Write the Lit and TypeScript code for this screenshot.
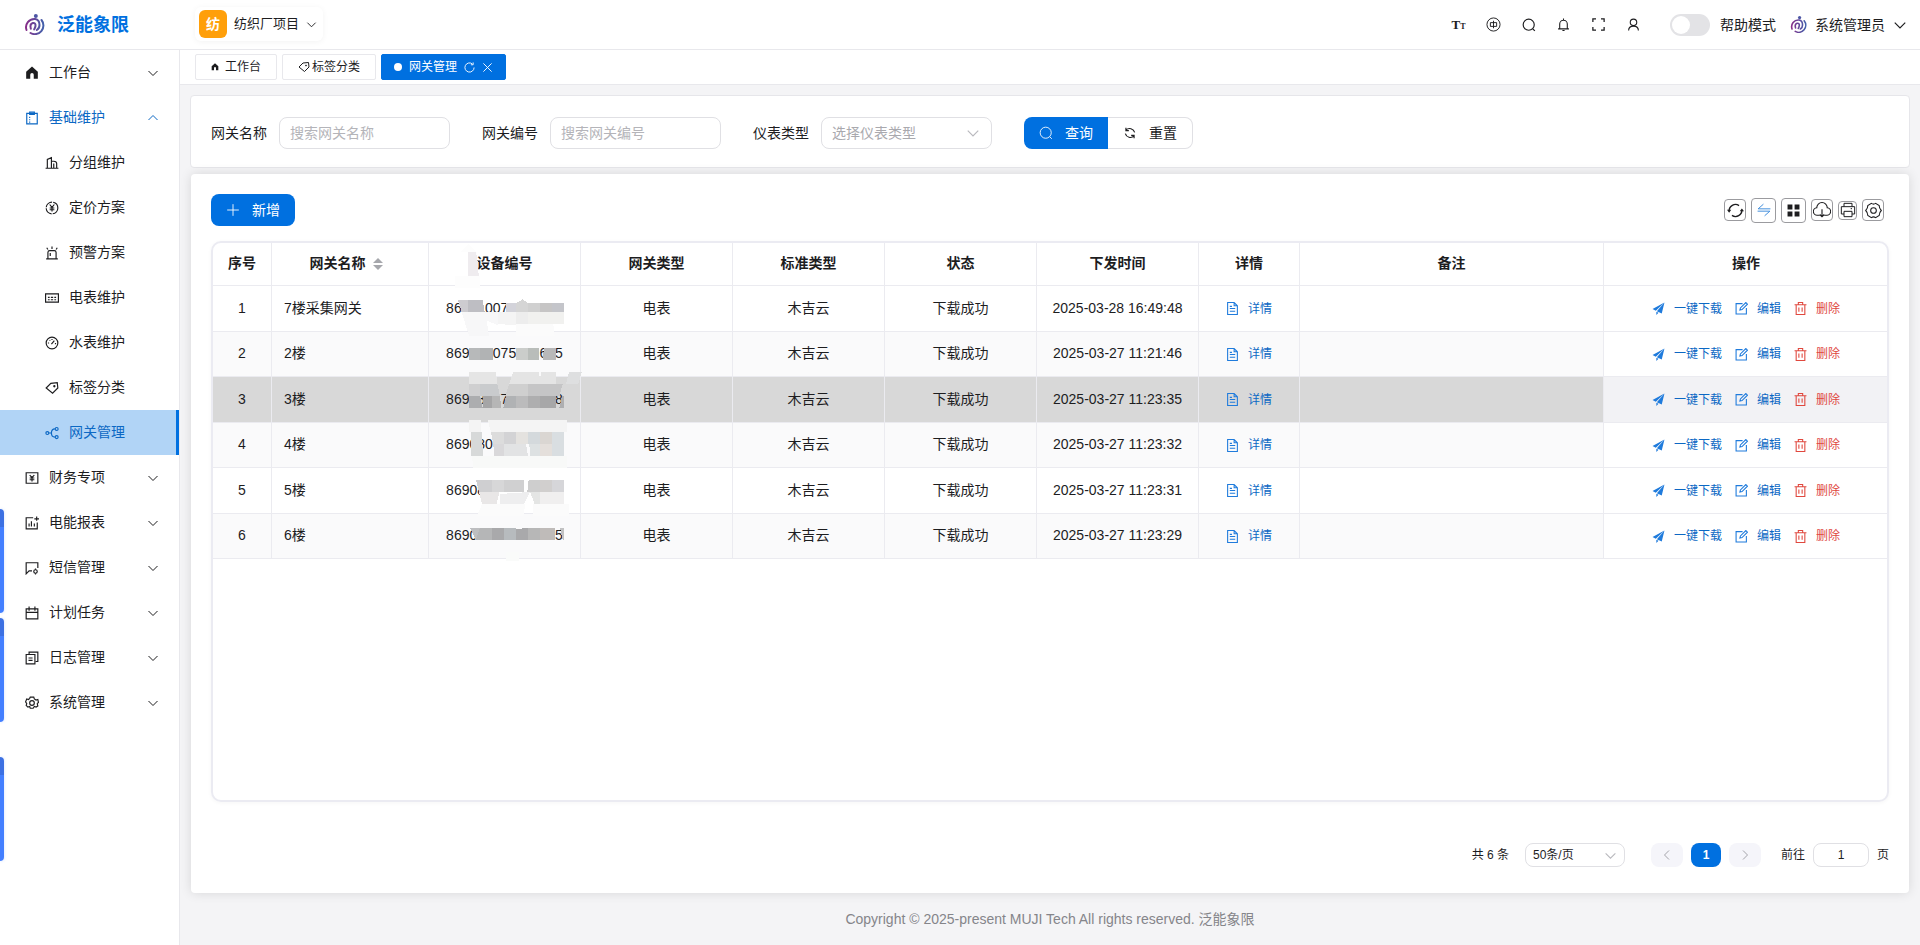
import { LitElement, html, svg, css, nothing } from "lit";
import { customElement } from "lit/decorators.js";
import { classMap } from "lit/directives/class-map.js";
import { styleMap } from "lit/directives/style-map.js";

/* Line icons share a 24-unit grid; "currentColor" carries the text colour. */
const glyphs: Record<string, unknown> = {
  down: svg`<path d="M3 8l9 9 9-9"/>`,
  up: svg`<path d="M3 16l9-9 9 9"/>`,
  left: svg`<path d="M16 3l-9 9 9 9"/>`,
  right: svg`<path d="M8 3l9 9-9 9"/>`,
  home: svg`<path class="f" d="M12 1L2 10v12h7v-7a3 3 0 0 1 6 0v7h7V10z"/>`,
  clipboard: svg`<path d="M3 4h18v18H3z"/><path d="M8 2h8v4H8zM7 11h2M7 15h2M7 19h2"/>`,
  building: svg`<path d="M1 21h22M4 21V6l7-3v18M11 9h4q5 0 5 4v8M15 13v8"/>`,
  coin: svg`<circle cx="12" cy="12" r="10" stroke-dasharray="14 2"/><path d="M8 6l4 5 4-5M8 12h8M8 15h8M12 11v7"/>`,
  alarm: svg`<path d="M5 22V11q0-3 3-3h8q3 0 3 3v11M2 22h20M12 5V1M5 6L3 3M19 6l2-3M9 12v5"/>`,
  meter: svg`<path d="M1 5h22v14H1z"/><path d="M5 11h3M10 11h4M16 11h3M5 15h3M10 15h4M16 15h3"/>`,
  gauge: svg`<circle cx="12" cy="12" r="10"/><path d="M11 14l5-6M5 12h2M17 13h2M8 7l1 1M12 5v2"/>`,
  tag: svg`<path d="M2 12l8-8 11-1 1 9-9 9z"/><circle cx="16" cy="9" r="1"/>`,
  nodes: svg`<circle cx="4" cy="12" r="2.500"/><circle cx="20" cy="5" r="2.500"/><circle cx="20" cy="19" r="2.500"/><path d="M7 12h4M17 5q-6 0-6 7t6 7"/>`,
  money: svg`<path d="M2 3h20v18H2z"/><path d="M8 7l4 4 4-4M8 12h8M8 15h8M12 11v7"/>`,
  chart: svg`<path d="M14 3H2v19h19V11M7 18v-5M11 18V9M16 18v-5M20 1v7M16 5h8"/>`,
  sms: svg`<path d="M12 17H7l-5 5V3h20v9"/><circle cx="18" cy="18" r="3"/><path d="M18 13v2M18 21v2"/>`,
  calendar: svg`<path d="M2 5h20v17H2zM2 11h20M7 1v7M17 1v7"/>`,
  copy: svg`<path d="M7 6V2h15v16h-4"/><path d="M2 6h15v16H2zM6 12h7M6 16h7"/>`,
  gear: svg`<path d="M9 2h6l1 3 3 2 3-1 1 5-2 2 1 4-3 2-3-1-2 3H9l-1-3-3 1-3-3 1-3-2-3 2-5 3 1 2-2z"/><circle cx="12" cy="12" r="4"/>`,
  search: svg`<circle cx="11.500" cy="11.500" r="9.500"/><path d="M18.500 18.500L22 22"/>`,
  bell: svg`<path d="M2 20h20M5 20v-9a7 7 0 0 1 14 0v9M12 4V1M10 23h4"/>`,
  full: svg`<path d="M3 8V3h5M16 3h5v5M21 16v5h-5M8 21H3v-5"/>`,
  user: svg`<circle cx="12" cy="8" r="6"/><path d="M3 23c0-6 4-8 9-8s9 2 9 8"/>`,
  lang: svg`<circle cx="12" cy="12" r="10.500"/><path d="M7 9h10v6H7zM12 6v12"/>`,
  reload: svg`<path d="M22 12a10 10 0 1 1-4-8M20 1v5h-5"/>`,
  close: svg`<path d="M3 3l18 18M21 3L3 21"/>`,
  refresh: svg`<path d="M5 7a9 9 0 0 1 15 4M19 17a9 9 0 0 1-15-4M5 3v5h5M19 21v-5h-5"/>`,
  sync: svg`<path d="M3 13A9 9 0 0 1 17 5M21 11A9 9 0 0 1 7 19"/><path class="f" d="M0 11l6 0-3 4zM24 13l-6 0 3-4z"/>`,
  plus: svg`<path d="M12 2v20M2 12h20"/>`,
  swap: svg`<path d="M23 10H2l9-8M1 14h21l-9 8"/>`,
  grid: svg`<path class="f" d="M1 1h9v9H1zM14 1h9v9h-9zM1 14h9v9H1zM14 14h9v9h-9z"/>`,
  cloud: svg`<path d="M9 19H6A5 5 0 0 1 5 9a7 7 0 0 1 14 0 5 5 0 0 1-1 10h-3M12 11v10M9 18l3 3 3-3"/>`,
  print: svg`<path d="M6 7V2h12v5M6 18H2V7h20v11h-4M6 14h12v8H6zM16 10h2"/>`,
  cog: svg`<path d="M9 2q3 2 6 0l5 3q0 4 3 7-3 3-3 7l-5 3q-3-2-6 0l-5-3q0-4-3-7 3-3 3-7z"/><circle cx="12" cy="12" r="4"/>`,
  doc: svg`<path d="M3 1h12l6 6v16H3zM15 1v6h6M7 12h10M7 17h10M7 8h4"/>`,
  send: svg`<path class="f" d="M23 1L1 13l6 3zM23 1L9 17l9 4zM8 18v6l4-4z"/>`,
  edit: svg`<path d="M14 3H2v19h19V11"/><path d="M9 15l1-4L20 1l3 3-10 10z"/>`,
  trash: svg`<path d="M1 5h22M4 5v18h16V5M8 5V1h8v4M9 10v8M15 10v8"/>`,
};

const icon = (name: string, size = 12, weight = 2) => html`<svg
  class="icon" width=${size} height=${size} viewBox="0 0 24 24"
  stroke-width=${weight} aria-hidden="true">${glyphs[name]}</svg>`;

const brandMark = (size: number) => html`<svg width=${size} height=${size} viewBox="0 0 60 63" fill="none" aria-hidden="true">
  <defs><linearGradient id="brand" gradientUnits="userSpaceOnUse" x1="0" y1="0" x2="60" y2="0"><stop offset="0" stop-color="#8c2a86"/><stop offset="1" stop-color="#3f63ad"/></linearGradient></defs>
  <circle cx="34" cy="6" r="6" fill="#4c56a4"/>
  <g stroke="url(#brand)" stroke-width="6" stroke-linecap="round">
    <path d="M6 48A25 25 0 0 1 32 15q13 2 13 18 0 10-8 15"/>
    <path d="M51 18a26 26 0 0 1-33 39"/>
    <path d="M19 44q-4-14 6-17 9-1 8 9-1 6-4 10"/>
  </g></svg>`;

const menu = [
  { icon: "home", label: "工作台" },
  {
    icon: "clipboard", label: "基础维护", open: true,
    children: [
      { icon: "building", label: "分组维护" },
      { icon: "coin", label: "定价方案" },
      { icon: "alarm", label: "预警方案" },
      { icon: "meter", label: "电表维护" },
      { icon: "gauge", label: "水表维护" },
      { icon: "tag", label: "标签分类" },
      { icon: "nodes", label: "网关管理", active: true },
    ],
  },
  { icon: "money", label: "财务专项" },
  { icon: "chart", label: "电能报表" },
  { icon: "sms", label: "短信管理" },
  { icon: "calendar", label: "计划任务" },
  { icon: "copy", label: "日志管理" },
  { icon: "gear", label: "系统管理" },
];

const columns = [
  { label: "序号", width: 59 },
  { label: "网关名称", width: 157 },
  { label: "设备编号", width: 152 },
  { label: "网关类型", width: 152 },
  { label: "标准类型", width: 152 },
  { label: "状态", width: 152 },
  { label: "下发时间", width: 162 },
  { label: "详情", width: 101 },
  { label: "备注", width: 304 },
  { label: "操作", width: 284 },
];

/* Device numbers are 15 digits; a number stands for that many masked digits. */
const rows: { name: string; device: (string | number)[]; time: string; current?: boolean }[] = [
  { name: "7楼采集网关", device: ["86", 3, "0075", 6], time: "2025-03-28 16:49:48" },
  { name: "2楼", device: ["869", 3, "075", 3, "6", 1, "5"], time: "2025-03-27 11:21:46" },
  { name: "3楼", device: ["869", 1, "8", 2, "7", 6, "8"], time: "2025-03-27 11:23:35", current: true },
  { name: "4楼", device: ["869080", 9], time: "2025-03-27 11:23:32" },
  { name: "5楼", device: ["86908", 10], time: "2025-03-27 11:23:31" },
  { name: "6楼", device: ["8690", 10, "5"], time: "2025-03-27 11:23:29" },
];

/* Mask tiles: [fill, polygon points], three units to a pixel. */
const tiles: [string, string][] = [
  ["#fdfdfd", "836,42 860,66 866,138 870,138 870,174 796,174 796,138 834,138 834,66 810,66"],
  ["#efecef", "834,66 858,66 864,100 866,138 834,138"],
  ["#cdccd0", "804,210 834,210 834,246 815,246"],
  ["#bebec3", "834,210 878,210 884,246 834,246"],
  ["#f7f7f8", "815,246 870,246 925,246 925,286 890,272 897,318 837,318"],
  ["#f4f4f4", "925,246 978,246 978,286 925,282"],
  ["#ededed", "978,246 1014,246 1014,282 978,282"],
  ["#f1f1ef", "1014,246 1122,246 1122,282 1014,282"],
  ["#d3d3da", "948,219 978,219 978,246 948,246"],
  ["#d5d5d5", "978,219 998,208 1014,219 1014,246 978,246"],
  ["#d0d0d0", "1014,219 1050,219 1050,246 1014,246"],
  ["#c6c5c5", "1050,219 1086,219 1086,246 1050,246"],
  ["#c4c5ca", "1086,219 1122,219 1122,246 1086,246"],
  ["#fbfbfb", "978,282 1090,282 1094,318 978,318"],
  ["#b7b9ba", "837,354 870,354 870,390 837,390"],
  ["#b1b3b4", "870,354 908,354 908,390 870,390"],
  ["#cbcdcb", "978,354 1014,354 1014,390 978,390"],
  ["#b9bdba", "1014,354 1047,354 1047,390 1014,390"],
  ["#b8b8b9", "1062,354 1098,354 1098,390 1058,390"],
  ["#e5e5e5", "837,426 918,426 922,462 837,462"],
  ["#e4e4e4", "970,426 1047,426 1047,438 1054,438 1054,426 1098,426 1098,462 958,462"],
  ["#dedfe0", "1137,426 1175,426 1165,462 1128,462"],
  ["#cfcfd0", "837,462 870,462 870,498 837,498"],
  ["#c9cbcd", "870,462 922,462 930,498 870,498"],
  ["#cfcfcf", "958,462 1014,462 1014,498 945,498"],
  ["#c5c5c6", "1014,462 1118,462 1108,498 1014,498"],
  ["#acadaf", "837,498 870,498 878,534 837,534"],
  ["#a5a5a6", "880,498 906,498 906,534 880,534"],
  ["#b6b6b6", "906,498 930,498 934,534 906,534"],
  ["#b0b2b4", "948,498 978,498 978,534 940,534"],
  ["#bbbbbc", "978,498 1014,498 1014,534 978,534"],
  ["#aeaeaf", "1014,498 1050,498 1050,534 1014,534"],
  ["#a7a7a8", "1050,498 1098,498 1098,534 1050,534"],
  ["#aeafb1", "1116,498 1122,498 1122,534 1108,534"],
  ["#f4f4f4", "837,570 873,570 873,606 837,606"],
  ["#f4f4f4", "893,570 1131,570 1131,606 903,606"],
  ["#d7d9d9", "843,606 875,606 879,678 843,678"],
  ["#dcdcdc", "903,606 942,606 942,642 910,642"],
  ["#d3d3d5", "942,606 978,606 978,642 942,642"],
  ["#e4e2df", "978,606 1014,606 1014,642 978,642"],
  ["#d4d9dc", "1014,606 1050,606 1050,642 1014,642"],
  ["#dad6d2", "1050,606 1086,606 1086,642 1050,642"],
  ["#d9dee1", "1086,606 1122,606 1122,678 1086,678"],
  ["#d9d8da", "910,642 942,642 942,678 912,678"],
  ["#e2e3e4", "942,642 1008,642 1014,678 942,678"],
  ["#dde1e2", "1018,642 1050,642 1050,678 1020,678"],
  ["#e4dfdb", "1050,642 1086,642 1086,678 1050,678"],
  ["#f8f9f8", "846,678 1131,678 1131,714 850,714"],
  ["#cfcfd1", "858,750 906,750 906,786 867,786"],
  ["#d7d7d8", "906,750 942,750 942,786 906,786"],
  ["#d0d0d1", "942,750 1002,750 1002,786 942,786"],
  ["#cecece", "1016,750 1050,750 1050,786 1012,786"],
  ["#d1cfce", "1050,750 1086,750 1086,786 1050,786"],
  ["#d6d6d9", "1086,750 1122,750 1122,786 1086,786"],
  ["#e9e7e7", "867,786 928,786 920,822 876,822"],
  ["#eeeeef", "930,792 1020,786 1002,822 930,822"],
  ["#e4e5e4", "1020,786 1050,786 1050,822 1034,822"],
  ["#f0efef", "1050,786 1122,786 1122,822 1050,822"],
  ["#fbfbfb", "876,822 1006,822 1000,858 861,858"],
  ["#fbfbfb", "1030,822 1137,822 1137,858 1030,858"],
  ["#bdbec0", "840,894 870,894 870,930 858,930"],
  ["#b5b6b7", "870,894 906,894 906,930 858,930"],
  ["#a9a9ab", "906,894 942,894 942,930 906,930"],
  ["#b7bbbe", "942,894 978,894 978,930 942,930"],
  ["#a9a9ab", "978,897 1014,894 1014,930 978,930"],
  ["#b7b7b7", "1014,894 1050,894 1050,930 1014,930"],
  ["#bfbbb9", "1050,894 1096,894 1096,930 1050,930"],
  ["#c2c2c3", "1110,894 1122,894 1122,930 1118,930"],
  ["#fafbfa", "948,966 986,966 986,992 948,992"],
];

const tools = [
  { icon: "sync", size: 22, art: 17, weight: 2, label: "刷新" },
  { icon: "swap", size: 25, art: 14, weight: 1.5, label: "切换", accent: true },
  { icon: "grid", size: 25, art: 13, weight: 1, label: "列设置" },
  { icon: "cloud", size: 22, art: 18, weight: 1.5, label: "导出" },
  { icon: "print", size: 19, art: 16, weight: 1.5, label: "打印" },
  { icon: "cog", size: 22, art: 17, weight: 1.5, label: "设置" },
];

@customElement("app-root")
export class AppRoot extends LitElement {
  static styles = css`
    :host {
      --blue: #0070e0;
      --line: #e8e8ec;
      display: flex;
      flex-direction: column;
      min-height: 100vh;
      position: relative;
      color: #1d1d1f;
      background: #f4f4f6;
      font: 14px/20px "Liberation Sans", "Noto Sans CJK SC", sans-serif;
    }
    * { box-sizing: border-box; }
    button, input, select { font: inherit; color: inherit; margin: 0; }
    button { cursor: pointer; }
    a { color: inherit; text-decoration: none; }
    .icon { flex: none; fill: none; stroke: currentColor; display: block; }
    .icon .f { fill: currentColor; stroke: none; }

    .top { display: flex; height: 50px; background: #fff; border-bottom: 1px solid var(--line); }
    .brand { width: 180px; flex: none; display: flex; align-items: center; gap: 12px; padding-left: 24px;
      color: var(--blue); font-size: 18px; font-weight: 700; }
    .project { display: flex; align-items: center; gap: 7px; height: 34px; margin: 7px 0 0 15px; padding: 0 6px 0 4px;
      border: 0; border-radius: 6px; background: #fff; box-shadow: 0 1px 6px rgba(0,0,0,.05); font-size: 13px; }
    .badge { width: 28px; height: 28px; border-radius: 6px; background: #ff9f0a; color: #fff; font-weight: 700; line-height: 28px; font-size: 14px; }
    .actions { margin-left: auto; display: flex; align-items: center; padding-right: 13px; }
    .ib { border: 0; background: none; padding: 0; width: 35px; height: 35px; display: grid; place-items: center; }
    .ib.tt { font: 700 13px "Liberation Serif", serif; display: flex; align-items: baseline; justify-content: center; line-height: 35px; }
    .tt small { font-size: 8px; }
    .help { display: flex; align-items: center; gap: 10px; margin-left: 19px; }
    .switch { appearance: none; width: 40px; height: 22px; margin: 0; border-radius: 11px; background: #e3e3e6; padding: 2px; }
    .switch::before { content: ""; display: block; width: 18px; height: 18px; border-radius: 50%; background: #fff; }
    .account { display: flex; align-items: center; gap: 8px; border: 0; background: none; padding: 0; margin-left: 14px; }

    .body { flex: 1; display: flex; }
    .side { width: 180px; flex: none; background: #fff; border-right: 1px solid var(--line); }
    .side ul { list-style: none; margin: 0; padding: 0; }
    .item { display: flex; align-items: center; gap: 10px; height: 45px; padding: 0 20px 0 25px; }
    .item .icon:last-child { margin-left: auto; }
    .item span { padding-bottom: 2px; }
    .item.sub { padding-left: 45px; }
    .item.open { color: #0c68c4; }
    .item.active { color: #0c68c4; background: #b1d4f6; border-right: 3px solid var(--blue); }

    .main { flex: 1; min-width: 0; display: flex; flex-direction: column; }
    .tabs { display: flex; gap: 5px; padding: 4px 15px; height: 35px; background: #fff; border-bottom: 1px solid var(--line); }
    .tab { display: flex; align-items: center; gap: 6px; height: 26px; padding: 0 15px; border: 1px solid var(--line); border-radius: 2px; font-size: 12px; }
    .tab.tight { gap: 2px; }
    .tab.on { background: var(--blue); border-color: var(--blue); color: #fff; padding: 0 12px; gap: 7px; }
    .dot { width: 8px; height: 8px; border-radius: 50%; background: #fff; }

    .panel { margin: 10px 10px 0; padding: 21px 20px 0; height: 73px; background: #fff; border: 1px solid #e6e6ea; border-radius: 4px; }
    .search { display: flex; align-items: center; gap: 32px; }
    .field { display: flex; align-items: center; gap: 12px; }
    .box { width: 171px; height: 32px; border: 1px solid #e0e0e4; border-radius: 8px; background: #fff; padding: 0 10px; outline: 0; }
    .box::placeholder { color: #b4b4b9; opacity: 1; }
    .pick { position: relative; display: flex; align-items: center; }
    .pick select { appearance: none; }
    .pick .box { color: #a9a9ae; }
    .pick .icon { position: absolute; right: 12px; color: #b9b9be; pointer-events: none; }
    .btn { display: flex; align-items: center; gap: 12px; height: 32px; padding: 0 15px; border: 0; border-radius: 8px; }
    .btn.primary { background: var(--blue); color: #fff; }
    .group { display: flex; }
    .group .btn:first-child { border-radius: 8px 0 0 8px; }
    .group .btn:last-child { border-radius: 0 8px 8px 0; background: #fff; border: 1px solid #e0e0e4; border-left: 0; }

    .card { flex: 1; display: flex; flex-direction: column; margin: 6px 11px 0; padding: 20px 20px 26px; background: #fff;
      border-radius: 4px; box-shadow: 0 0 12px rgba(0,0,0,.12); }
    .bar { display: flex; justify-content: space-between; align-items: center; }
    .tools { display: flex; align-items: center; gap: 5px; padding-right: 5px; }
    .tool { display: grid; place-items: center; padding: 0; border: 1px solid #9b9b9f; border-radius: 4px; background: #fff; }
    .tool.accent { color: #2a80d8; }

    .frame { flex: 1; margin-top: 15px; border: 2px solid #ebebf2; border-radius: 10px; overflow: hidden; box-shadow: 0 1px 4px rgba(0,0,0,.04); }
    table { width: 100%; border-collapse: separate; border-spacing: 0; table-layout: fixed; }
    th, td { padding: 0 0 2px; text-align: center; border-right: 1px solid #ebebf0; border-bottom: 1px solid #ebebf0; font-weight: 400; }
    th:last-child, td:last-child { border-right: 0; }
    th { height: 43px; font-weight: 700; position: relative; }
    td { height: 45px; }
    tr:nth-child(odd) td { height: 46px; }
    td.name { text-align: left; padding-left: 12px; }
    tbody tr:nth-child(even) td { background: #fafafb; }
    tbody tr.current td { background: #d8d8d8; }
    tbody tr td:last-child { background: #fff; }
    tbody tr.current td:last-child { background: #f2f2f5; }
    .sort { display: inline-flex; flex-direction: column; gap: 2px; vertical-align: middle; margin: 0 8px 0 7px; }
    .sort i { border: 5px solid transparent; border-top: 0; border-bottom-color: #a6a7ac; }
    .sort i + i { border-top: 5px solid #a6a7ac; border-bottom: 0; }
    .mask { position: absolute; z-index: 1; top: -1px; left: 50%; margin-left: -77px; width: 152px; height: 330px; pointer-events: none; }
    .gap { display: inline-block; }
    .links { display: flex; justify-content: center; gap: 13px; padding-top: 2px; font-size: 12px; }
    .link { display: flex; align-items: center; gap: 9px; color: #0c68c4; }
    .link .icon { color: #1f7bdc; }
    .link.danger, .link.danger .icon { color: #e0483e; }

    .pager { display: flex; justify-content: flex-end; align-items: center; gap: 8px; margin-top: 41px; font-size: 12px; }
    .pager .box { height: 24px; border-radius: 8px; color: #1d1d1f; }
    .pager .pick { margin: 0 18px 0 8px; }
    .pager .pick .box { width: 100px; padding: 0 7px; }
    .pager .pick .icon { right: 8px; }
    .page { height: 24px; width: 32px; padding: 0; border: 0; border-radius: 8px; display: grid; place-items: center; background: #f5f5fa; color: #a4a4aa; }
    .page.on { width: 30px; background: var(--blue); color: #fff; font-weight: 700; }
    .jump { display: flex; align-items: center; gap: 8px; margin-left: 12px; }
    .jump .box { width: 56px; text-align: center; padding: 0; }
    footer { height: 52px; display: grid; place-items: center; color: #85858a; }

    .stub { position: absolute; left: 0; width: 4px; height: 104px; border-radius: 0 6px 6px 0; box-shadow: 0 0 3px rgba(66,126,255,.25);
      background: linear-gradient(#3c70e2 18px, #437fff 18px); }
  `;

  private menuItem(m: any): unknown {
    return html`<li>
      <a href="#" class="item ${classMap({ open: !!m.open })}">${icon(m.icon, 14)}<span>${m.label}</span>${icon(m.open ? "up" : "down", 12, 2)}</a>
      ${m.children
        ? html`<ul>${m.children.map((c: any) => html`<li>
            <a href="#" class="item sub ${classMap({ active: !!c.active })}">${icon(c.icon, 14)}<span>${c.label}</span></a></li>`)}</ul>`
        : nothing}
    </li>`;
  }

  private digits(parts: (string | number)[]) {
    return parts.map((p) => typeof p === "string" ? p : html`<span class="gap" style=${styleMap({ width: `${p}ch` })}></span>`);
  }

  private head(label: string) {
    if (label === "网关名称") return html`${label}<span class="sort"><i></i><i></i></span>`;
    if (label === "设备编号") return html`${label}<svg class="mask" viewBox="714 36 456 990" overflow="visible" shape-rendering="crispEdges" aria-hidden="true">
      ${tiles.map(([fill, points]) => svg`<polygon fill=${fill} points=${points} />`)}</svg>`;
    return label;
  }

  render() {
    return html`
      <header class="top">
        <div class="brand">${brandMark(21)}<span>泛能象限</span></div>
        <button class="project"><span class="badge">纺</span>纺织厂项目${icon("down", 11, 2)}</button>
        <div class="actions">
          <button class="ib tt" aria-label="字号">T<small>T</small></button>
          <button class="ib" aria-label="语言">${icon("lang", 15, 1.5)}</button>
          <button class="ib" aria-label="搜索">${icon("search", 14)}</button>
          <button class="ib" aria-label="通知">${icon("bell", 13)}</button>
          <button class="ib" aria-label="全屏">${icon("full", 15)}</button>
          <button class="ib" aria-label="用户">${icon("user", 13)}</button>
          <label class="help"><input class="switch" type="checkbox" role="switch" />帮助模式</label>
          <button class="account">${brandMark(17)}<span>系统管理员</span>${icon("down", 14, 2)}</button>
        </div>
      </header>
      <div class="body">
        <nav class="side"><ul>${menu.map((m) => this.menuItem(m))}</ul></nav>
        <div class="main">
          <nav class="tabs">
            <a class="tab" href="#">${icon("home", 8)}工作台</a>
            <a class="tab tight" href="#">${icon("tag", 12)}标签分类</a>
            <a class="tab on" href="#"><span class="dot"></span>网关管理${icon("reload", 11)}${icon("close", 11, 2)}</a>
          </nav>
          <section class="panel">
            <form class="search">
              <div class="field"><label for="name">网关名称</label><input id="name" class="box" placeholder="搜索网关名称" /></div>
              <div class="field"><label for="code">网关编号</label><input id="code" class="box" placeholder="搜索网关编号" /></div>
              <div class="field"><label for="kind">仪表类型</label>
                <div class="pick"><select id="kind" class="box"><option>选择仪表类型</option></select>${icon("down", 14, 2)}</div></div>
              <div class="group">
                <button type="button" class="btn primary">${icon("search", 14, 1.5)}查询</button>
                <button type="button" class="btn">${icon("refresh", 14)}重置</button>
              </div>
            </form>
          </section>
          <section class="card">
            <div class="bar">
              <button class="btn primary">${icon("plus", 14, 1.5)}新增</button>
              <div class="tools">${tools.map((t) => html`<button class="tool ${classMap({ accent: !!t.accent })}" aria-label=${t.label}
                style=${styleMap({ width: `${t.size}px`, height: `${t.size}px` })}>${icon(t.icon, t.art, t.weight)}</button>`)}</div>
            </div>
            <div class="frame">
              <table>
                <colgroup>${columns.map((c) => html`<col style=${styleMap({ width: `${c.width}px` })} />`)}</colgroup>
                <thead><tr>${columns.map((c) => html`<th>${this.head(c.label)}</th>`)}</tr></thead>
                <tbody>${rows.map((r, i) => html`<tr class=${classMap({ current: !!r.current })}>
                  <td>${i + 1}</td>
                  <td class="name">${r.name}</td>
                  <td>${this.digits(r.device)}</td>
                  <td>电表</td><td>木吉云</td><td>下载成功</td>
                  <td>${r.time}</td>
                  <td><div class="links"><a class="link" href="#">${icon("doc", 13)}详情</a></div></td>
                  <td></td>
                  <td><div class="links">
                    <a class="link" href="#">${icon("send", 13)}一键下载</a>
                    <a class="link" href="#">${icon("edit", 13)}编辑</a>
                    <a class="link danger" href="#">${icon("trash", 13)}删除</a>
                  </div></td>
                </tr>`)}</tbody>
              </table>
            </div>
            <div class="pager">
              <span>共 6 条</span>
              <div class="pick"><select class="box" aria-label="每页条数"><option>50条/页</option></select>${icon("down", 13, 2)}</div>
              <button class="page" aria-label="上一页">${icon("left", 12, 2)}</button>
              <button class="page on">1</button>
              <button class="page" aria-label="下一页">${icon("right", 12, 2)}</button>
              <label class="jump">前往<input class="box" .value=${"1"} />页</label>
            </div>
          </section>
          <footer>Copyright © 2025-present MUJI Tech All rights reserved. 泛能象限</footer>
        </div>
      </div>
      ${[509, 618, 757].map((y) => html`<div class="stub" style=${styleMap({ top: `${y}px` })}></div>`)}
    `;
  }
}
